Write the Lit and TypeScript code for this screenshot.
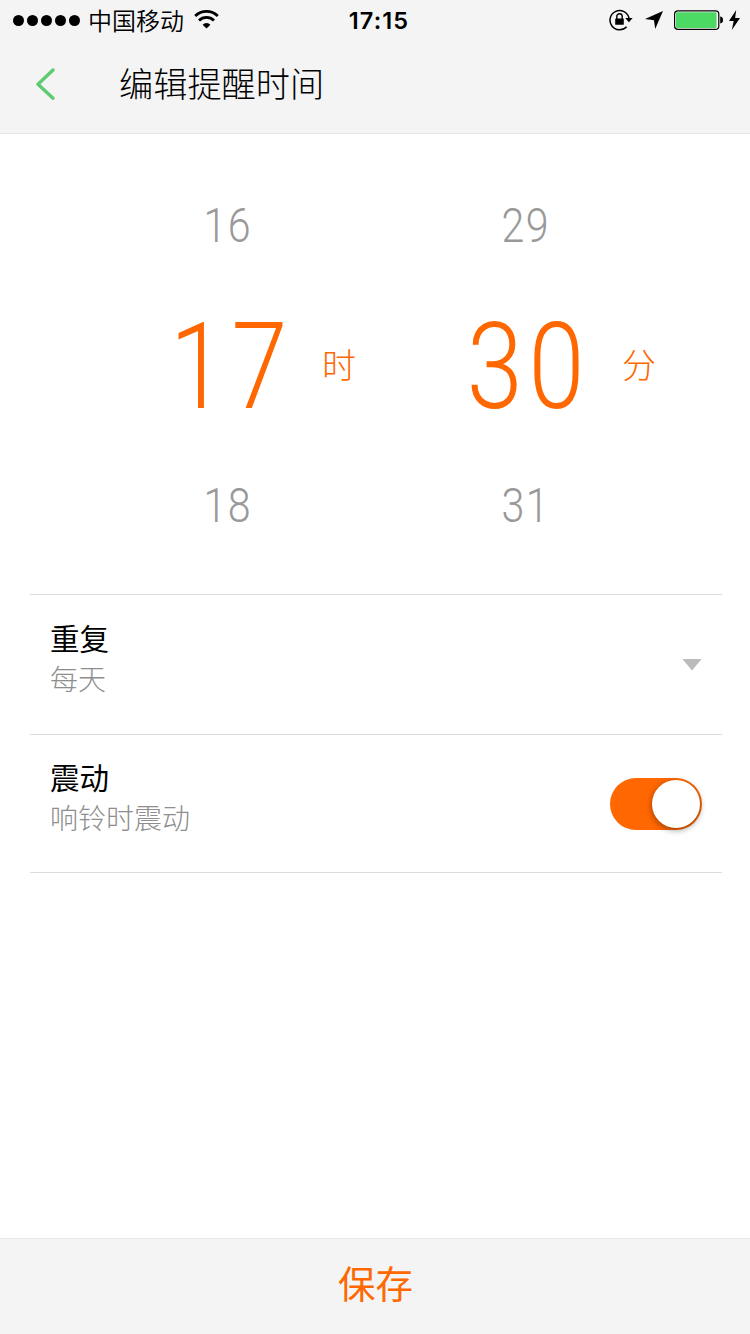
import { LitElement, html, css } from "lit";
import { customElement, property, state } from "lit/decorators.js";

@customElement("status-bar")
class StatusBar extends LitElement {
  static styles = css`
    :host { display: flex; height: 40px; position: relative; align-items: center; box-sizing: border-box; padding: 0 10px 0 13px; color: #000; }
    .dots { display: flex; gap: 3px; margin-right: 9px; }
    .dot { width: 11px; height: 11px; border-radius: 50%; background: #000; }
    .carrier { font: 400 24px/40px "Noto Sans CJK SC", sans-serif; font-weight: 350; margin-left: -1px; }
    .wifi { margin: 0 0 1px 10px; }
    .time { position: absolute; left: 0; right: 0; top: 0; padding-left: 8px; text-align: center; font: 600 23.5px/42px Inter, sans-serif; letter-spacing: 1.1px; pointer-events: none; }
    .right { margin-left: auto; display: flex; align-items: center; height: 40px; }
    svg { display: block; }
    .lock { margin-right: 12px; }
    .arrow { margin-right: 11px; }
    .battery { margin-right: 5px; }
  `;
  render() {
    return html`
      <div class="dots">${[1, 2, 3, 4, 5].map(() => html`<span class="dot"></span>`)}</div>
      <span class="carrier">中国移动</span>
      <svg class="wifi" width="25" height="19" viewBox="0 0 25 19" fill="none" stroke="#000" stroke-width="2.8">
        <path d="M1.2 6.1A16 16 0 0 1 23.8 6.1" />
        <path d="M5 10.4A10.7 10.7 0 0 1 20 10.4" />
        <path d="M12.5 18.6L8.6 14.7A5.5 5.5 0 0 1 16.4 14.7Z" fill="#000" stroke="none" />
      </svg>
      <span class="time">17:15</span>
      <div class="right">
        <svg class="lock" width="24" height="22" viewBox="0 0 24 22">
          <path d="M17.6 17.8A9.6 9.6 0 1 1 20 9.2" fill="none" stroke="#000" stroke-width="1.5" />
          <path d="M16.2 9.1H23.6L19.9 13.2Z" />
          <rect x="6.2" y="9.4" width="8.6" height="6.4" rx=".6" />
          <path d="M7.8 10V7.4A2.6 2.6 0 0 1 13.2 7.4V10" fill="none" stroke="#000" stroke-width="1.4" />
        </svg>
        <svg class="arrow" width="18" height="18" viewBox="0 0 18 18"><path d="M18 0L10.2 18L9 9.2L0 8Z" /></svg>
        <svg class="battery" width="50" height="20" viewBox="0 0 50 20">
          <rect x=".6" y=".9" width="44.2" height="18.4" rx="3.4" fill="#fff" stroke="#000" stroke-width="1.2" />
          <rect x="2" y="2.3" width="40.6" height="15.6" rx="1.2" fill="#4cd964" />
          <path d="M46.2 6.6Q49 6.8 49 10T46.2 13.4Z" />
        </svg>
        <svg width="11" height="20" viewBox="0 0 11 20"><path d="M7.2 0L0 11H4.7L2.8 20L11 8H6.1Z" /></svg>
      </div>
    `;
  }
}

@customElement("time-wheel")
class TimeWheel extends LitElement {
  @property({ type: Array }) values: string[] = [];
  @property() unit = "";
  static styles = css`
    :host { display: grid; grid-template: repeat(3, 140px) / 124px auto; align-items: center; }
    .digits { font-family: Roboto, sans-serif; font-weight: 300; text-align: center; grid-column: 1; justify-self: center; transform: scaleX(0.84); white-space: nowrap; }
    .near { font-size: 49px; line-height: 138px; padding-top: 2px; color: #999; letter-spacing: 1.5px; margin-right: -2px; }
    .current { font-size: 120px; line-height: 136px; padding-top: 4px; color: #ff6700; letter-spacing: 7px; margin-right: -7px; }
    :host(.hours) .current { margin-right: -10px; }
    .unit { font: 300 34px/138px "Noto Sans CJK SC", sans-serif; color: #ff6700; padding-bottom: 2px; margin-left: 33px; }
    :host(.minutes) .unit { margin-left: 35px; }
  `;
  render() {
    return html`
      <span class="digits near">${this.values[0]}</span><span></span>
      <span class="digits current">${this.values[1]}</span><span class="unit">${this.unit}</span>
      <span class="digits near">${this.values[2]}</span>
    `;
  }
}

@customElement("app-root")
class AppRoot extends LitElement {
  @state() vibrate = true;
  static styles = css`
    :host { display: flex; flex-direction: column; height: 1334px; background: #fff; font-family: "Noto Sans CJK SC", sans-serif; color: #000; overflow: hidden; }
    header { background: #f4f4f4; border-bottom: 1px solid #e6e6e6; height: 133px; }
    .nav { display: flex; align-items: center; height: 88px; padding-left: 36px; }
    .back { display: block; }
    h1 { margin: 0 0 0 63px; font-weight: 300; font-size: 34.2px; line-height: 85px; padding-bottom: 3px; }
    .picker { display: flex; padding: 21px 0 19px 165px; height: 420px; }
    .minutes { margin-left: 107px; }
    .list { margin: 0 28px 0 30px; border-top: 1px solid #dcdcdc; }
    .row { display: flex; align-items: center; justify-content: space-between; height: 139px; padding: 0 20px; border-bottom: 1px solid #dcdcdc; }
    .row.last { height: 137px; }
    .text { display: flex; flex-direction: column; margin-bottom: 14px; }
    .name { font-size: 29.5px; line-height: 38px; padding-bottom: 2px; font-weight: 400; }
    .value { font-size: 28px; line-height: 40px; font-weight: 300; color: #8e8e8e; }
    .caret { width: 20px; height: 12px; background: #bbb; clip-path: polygon(0 0, 100% 0, 50% 100%); }
    .switch { width: 92px; height: 52px; padding: 2px; box-sizing: border-box; border: 0; border-radius: 26px; background: #ccc; display: flex; }
    .switch.on { background: #ff6700; justify-content: flex-end; }
    .knob { width: 48px; height: 48px; border-radius: 50%; background: #fff; box-shadow: 0 2px 6px rgba(0, 0, 0, 0.4); }
    footer { margin-top: auto; height: 95px; background: #f4f4f4; border-top: 1px solid #e6e6e6; display: flex; justify-content: center; color: #ff6700; font-size: 37.5px; line-height: 86px; padding-left: 1px; }
  `;
  render() {
    return html`
      <header>
        <status-bar></status-bar>
        <div class="nav">
          <svg class="back" width="20" height="32" viewBox="0 0 20 32" fill="none" stroke="#5ecb72" stroke-width="3.4" stroke-linecap="round" stroke-linejoin="round"><path d="M17 2L2 16.3L17 30.2" /></svg>
          <h1>编辑提醒时间</h1>
        </div>
      </header>
      <section class="picker">
        <time-wheel class="hours" .values=${["16", "17", "18"]} unit="时"></time-wheel>
        <time-wheel class="minutes" .values=${["29", "30", "31"]} unit="分"></time-wheel>
      </section>
      <section class="list">
        <div class="row">
          <div class="text"><span class="name">重复</span><span class="value">每天</span></div>
          <span class="caret"></span>
        </div>
        <div class="row last">
          <div class="text"><span class="name">震动</span><span class="value">响铃时震动</span></div>
          <button class="switch ${this.vibrate ? "on" : ""}" @click=${() => (this.vibrate = !this.vibrate)}><span class="knob"></span></button>
        </div>
      </section>
      <footer>保存</footer>
    `;
  }
}
